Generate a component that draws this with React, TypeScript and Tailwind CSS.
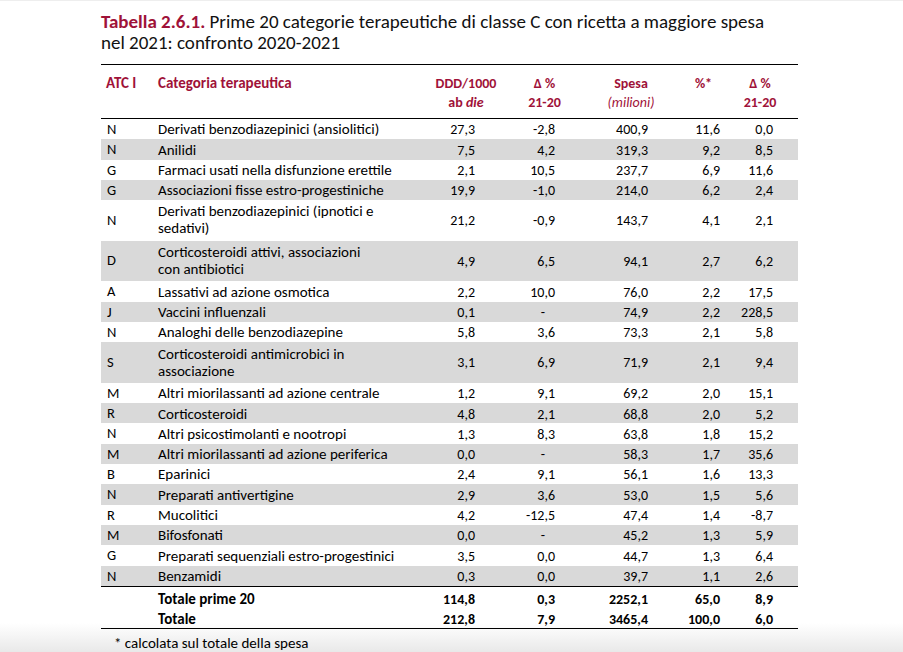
import React from "react";

type Row = [string, string | string[], string, string, string, string, string];

const rows: Row[] = [
  ["N", "Derivati benzodiazepinici (ansiolitici)", "27,3", "-2,8", "400,9", "11,6", "0,0"],
  ["N", "Anilidi", "7,5", "4,2", "319,3", "9,2", "8,5"],
  ["G", "Farmaci usati nella disfunzione erettile", "2,1", "10,5", "237,7", "6,9", "11,6"],
  ["G", "Associazioni fisse estro-progestiniche", "19,9", "-1,0", "214,0", "6,2", "2,4"],
  ["N", ["Derivati benzodiazepinici (ipnotici e", "sedativi)"], "21,2", "-0,9", "143,7", "4,1", "2,1"],
  ["D", ["Corticosteroidi attivi, associazioni", "con antibiotici"], "4,9", "6,5", "94,1", "2,7", "6,2"],
  ["A", "Lassativi ad azione osmotica", "2,2", "10,0", "76,0", "2,2", "17,5"],
  ["J", "Vaccini influenzali", "0,1", "-", "74,9", "2,2", "228,5"],
  ["N", "Analoghi delle benzodiazepine", "5,8", "3,6", "73,3", "2,1", "5,8"],
  ["S", ["Corticosteroidi antimicrobici in", "associazione"], "3,1", "6,9", "71,9", "2,1", "9,4"],
  ["M", "Altri miorilassanti ad azione centrale", "1,2", "9,1", "69,2", "2,0", "15,1"],
  ["R", "Corticosteroidi", "4,8", "2,1", "68,8", "2,0", "5,2"],
  ["N", "Altri psicostimolanti e nootropi", "1,3", "8,3", "63,8", "1,8", "15,2"],
  ["M", "Altri miorilassanti ad azione periferica", "0,0", "-", "58,3", "1,7", "35,6"],
  ["B", "Eparinici", "2,4", "9,1", "56,1", "1,6", "13,3"],
  ["N", "Preparati antivertigine", "2,9", "3,6", "53,0", "1,5", "5,6"],
  ["R", "Mucolitici", "4,2", "-12,5", "47,4", "1,4", "-8,7"],
  ["M", "Bifosfonati", "0,0", "-", "45,2", "1,3", "5,9"],
  ["G", "Preparati sequenziali estro-progestinici", "3,5", "0,0", "44,7", "1,3", "6,4"],
  ["N", "Benzamidi", "0,3", "0,0", "39,7", "1,1", "2,6"],
];

const totals = [
  ["Totale prime 20", "114,8", "0,3", "2252,1", "65,0", "8,9"],
  ["Totale", "212,8", "7,9", "3465,4", "100,0", "6,0"],
];

const grid = "grid grid-cols-[57px_262px_92px_65px_108px_37px_76px]";

const NumCells = ({ v }: { v: string[] }) => (
  <>
    <div className="flex items-center justify-end pr-[37px]">{v[0]}</div>
    <div className={`flex items-center justify-end ${v[1] === "-" ? "pr-[32px]" : "pr-[22px]"}`}>
      {v[1]}
    </div>
    <div className="flex items-center justify-end pr-[37px]">{v[2]}</div>
    <div className="flex items-center justify-end pr-[2px]">{v[3]}</div>
    <div className="flex items-center justify-end pr-[25px]">{v[4]}</div>
  </>
);

export default function App() {
  return (
    <div
      className="h-[652px] w-[903px] overflow-hidden border-t border-[#eeeeee] bg-[linear-gradient(to_bottom,#ffffff_622px,#e8e8e8_652px)] pl-[101px] text-black"
      style={{ fontFamily: "Carlito, Calibri, Lato, sans-serif" }}
    >
      <div className="w-[697px]">
        <h1 className="mt-[10px] text-[19px] leading-[21px] text-[#111111]">
          <span className="font-bold text-[#9f1239]">Tabella 2.6.1.</span> Prime 20 categorie terapeutiche di
          classe C con ricetta a maggiore spesa
          <br />
          nel 2021: confronto 2020-2021
        </h1>

        <div className="mt-[11px] border-t border-black" />
        <div className={`${grid} h-[53px] pt-[9px] text-[14px] font-bold leading-[19px] text-[#9f1239]`}>
          <div className="pl-[5px] text-[15px]">ATC I</div>
          <div className="text-[15px]">Categoria terapeutica</div>
          <div className="text-center">
            DDD/1000
            <br />
            ab <i>die</i>
          </div>
          <div className="text-center">
            Δ %
            <br />
            21-20
          </div>
          <div className="text-center">
            Spesa
            <br />
            <i className="font-normal">(milioni)</i>
          </div>
          <div className="text-center">%*</div>
          <div className="text-center">
            Δ %
            <br />
            21-20
          </div>
        </div>
        <div className="border-t border-black" />

        <div className="text-[14px]">
          {rows.map((r, i) => {
            const two = Array.isArray(r[1]);
            return (
              <div
                key={i}
                className={`${grid} ${two ? "h-[40.6px]" : "h-[20.3px]"} ${i % 2 === 1 ? "bg-[#d9d9d9]" : ""}`}
              >
                <div className="flex items-center pl-[6px] text-[14.5px]">{r[0]}</div>
                <div className="flex flex-col justify-center text-[15px] leading-[17px]">
                  {two ? (r[1] as string[]).map((l) => <span key={l}>{l}</span>) : r[1]}
                </div>
                <NumCells v={r.slice(2) as string[]} />
              </div>
            );
          })}
        </div>

        <div className="border-t border-black" />
        <div className="pt-[1px] text-[14px] font-bold">
          {totals.map((t) => (
            <div key={t[0]} className={`${grid} h-[20px]`}>
              <div />
              <div className="flex items-center text-[15px]">{t[0]}</div>
              <NumCells v={t.slice(1)} />
            </div>
          ))}
        </div>
        <div className="border-t border-black" />

        <p className="pl-[13px] pt-[5px] text-[15px] leading-[18px]">* calcolata sul totale della spesa</p>
      </div>
    </div>
  );
}
